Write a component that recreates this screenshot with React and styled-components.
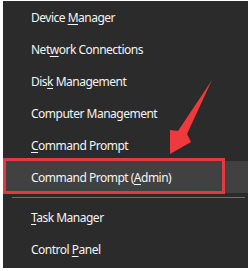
import styled, { createGlobalStyle } from "styled-components";

const GlobalStyle = createGlobalStyle`
    html, body {
        margin: 0;
        padding: 0;
        background: #fff;
    }
`;

const items = [
    { pre: "Device ", key: "M", post: "anager" },
    { pre: "Net", key: "w", post: "ork Connections" },
    { pre: "Dis", key: "k", post: " Management" },
    { pre: "Computer Management", key: "", post: "" },
    { pre: "", key: "C", post: "ommand Prompt" },
    { pre: "Command Prompt (", key: "A", post: "dmin)", active: true },
    { separator: true },
    { pre: "", key: "T", post: "ask Manager" },
    { pre: "Control ", key: "P", post: "anel" },
];

export default function App() {
    return (
        <>
            <GlobalStyle />
            <Wrap>
                <Menu>
                    {items.map((item, i) =>
                        item.separator ? (
                            <Separator key={i} />
                        ) : (
                            <Item key={i} $active={item.active}>
                                <Label>
                                    {item.pre}
                                    {item.key && <u>{item.key}</u>}
                                    {item.post}
                                </Label>
                                {item.active && <Callout />}
                            </Item>
                        )
                    )}
                </Menu>
                <Arrow viewBox="0 0 251 271" width="251" height="271">
                    <polygon
                        points="212,80 187,134 191,142 170,154 170,130 178,131"
                        fill="#ee3a3d"
                    />
                </Arrow>
            </Wrap>
        </>
    );
}

const Wrap = styled.div`
    position: relative;
    width: 251px;
    height: 271px;
    padding: 1px 3px 0 3px;
    box-sizing: border-box;
    background: #fff;
`;

const Menu = styled.ul`
    margin: 0;
    padding: 0 0 3px;
    list-style: none;
    background: #2b2b2b;
    font-family: "Segoe UI", "Noto Sans", sans-serif;
    font-size: 12px;
    letter-spacing: -0.5px;
    color: #f4f4f4;
`;

const Item = styled.li`
    position: relative;
    height: 32px;
    display: flex;
    align-items: center;
    padding-left: 28px;
    white-space: pre;
    background: ${(p) => (p.$active ? "#414141" : "transparent")};
`;

const Label = styled.span`
    u {
        text-decoration-thickness: 1px;
        text-underline-offset: 2px;
    }
`;

const Callout = styled.span`
    position: absolute;
    left: 0;
    top: -3px;
    width: 222px;
    height: 36px;
    box-sizing: border-box;
    border: 3px solid #e23a3e;
`;

const Separator = styled.li`
    height: 8px;
    display: flex;
    align-items: center;
    padding: 0 3px 0 9px;

    &::after {
        content: "";
        flex: 1;
        height: 1px;
        background: #6f6f6f;
    }
`;

const Arrow = styled.svg`
    position: absolute;
    left: 0;
    top: 0;
    pointer-events: none;
`;
